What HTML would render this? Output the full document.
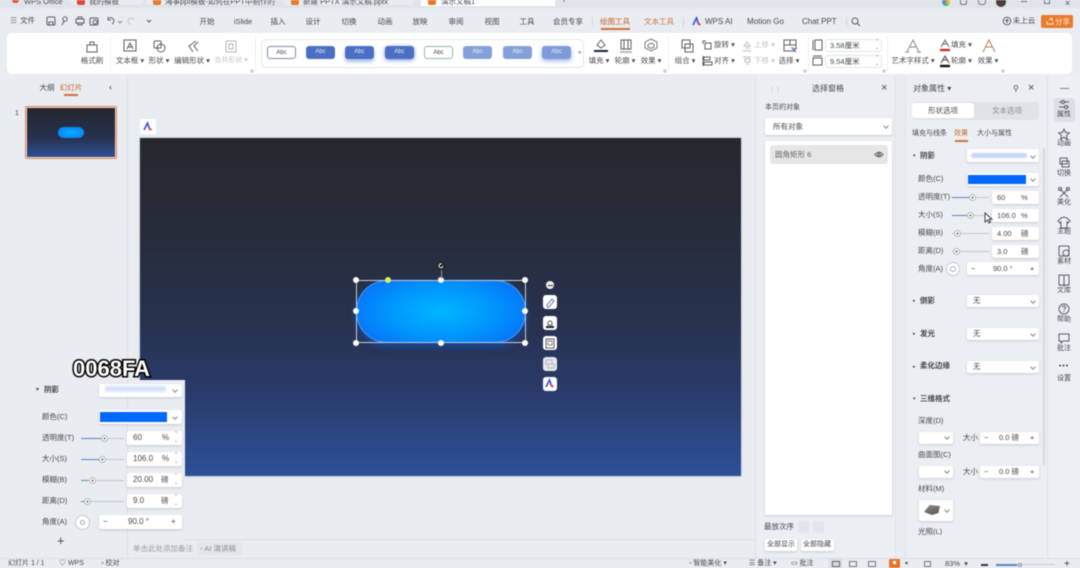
<!DOCTYPE html>
<html><head><meta charset="utf-8">
<style>
*{box-sizing:border-box;margin:0;padding:0}
html,body{width:1080px;height:568px;overflow:hidden;background:#e9ecf1}
body{font-family:"Liberation Sans","Noto Sans CJK SC",sans-serif;color:#46494e;position:relative}
#r{position:absolute;left:0;top:0;width:1080px;height:568px;overflow:hidden;filter:blur(.4px)}
.a{position:absolute}
.t{position:absolute;white-space:nowrap;font-size:7.5px;line-height:10px}
.c{transform:translateX(-50%)}
.w{position:absolute;background:#fff;border-radius:2px;box-shadow:0 1px 2px rgba(90,100,120,.25)}
.abc{position:absolute;top:46px;width:29px;height:13px;border-radius:3px;font-size:6px;line-height:13px;text-align:center;color:#e8edf8;background:#4a6fc4}
.v{position:absolute;width:4px;height:4px;border-right:1px solid #888;border-bottom:1px solid #888;transform:rotate(45deg)}
.tr{position:absolute;height:1.5px;background:#c3c7cd}
.fi{position:absolute;height:1.5px;background:#5b82c8}
.k{position:absolute;width:7px;height:7px;border-radius:50%;background:#fff;border:1px solid #bbb;box-shadow:inset 0 0 0 1.5px #fff,inset 0 0 0 3px #666}
.h{position:absolute;width:6px;height:6px;border-radius:50%;background:#fff}
svg{position:absolute;overflow:visible}
svg *{fill:none;stroke:#5a5e64;stroke-width:1}
</style></head><body><div id="r">

<!-- title bar -->
<div class="a" style="left:0;top:0;width:1080px;height:8px;background:#dfe4ea"></div>
<div class="a" style="left:71px;top:0;width:72px;height:5px;background:#e8ebef;border-radius:0 0 3px 3px"></div>
<div class="a" style="left:146px;top:0;width:129px;height:5px;background:#e8ebef"></div>
<div class="a" style="left:284px;top:0;width:129px;height:5px;background:#e8ebef"></div>
<div class="a" style="left:421px;top:0;width:134px;height:6px;background:#fff"></div>
<div class="a" style="left:12px;top:0;width:7px;height:3px;background:#e0523f;border-radius:0 0 3px 3px"></div>
<div class="a" style="left:77px;top:0;width:8px;height:5px;background:#e0483f;border-radius:0 0 2px 2px"></div>
<div class="a" style="left:153px;top:0;width:8px;height:5px;background:#e8792b;border-radius:0 0 2px 2px"></div>
<div class="a" style="left:291px;top:0;width:8px;height:5px;background:#e8792b;border-radius:0 0 2px 2px"></div>
<div class="a" style="left:428px;top:0;width:8px;height:5px;background:#e8792b;border-radius:0 0 2px 2px"></div>
<div class="t" style="left:24px;top:-3px">WPS Office</div>
<div class="t" style="left:89px;top:-3px">我的模板</div>
<div class="t" style="left:165px;top:-3px">海事ppt模板-如何在PPT中制作的</div>
<div class="t" style="left:303px;top:-3px">新建 PPTX 演示文稿.pptx</div>
<div class="t" style="left:441px;top:-3px">演示文稿1</div>
<div class="t" style="left:561px;top:-4px;font-size:10px">+</div>
<div class="a" style="left:942px;top:-2px;width:8px;height:8px;border-radius:50%;background:conic-gradient(#e55,#ec3,#4b6,#39e,#e55)"></div>
<div class="a" style="left:960px;top:-2px;width:7px;height:7px;border:1px solid #777;border-radius:2px"></div>
<div class="a" style="left:978px;top:-2px;width:8px;height:7px;border:1px solid #777;border-radius:3px"></div>
<div class="a" style="left:996px;top:-3px;width:10px;height:10px;border-radius:50%;background:#4a3d3a"></div>
<div class="a" style="left:1021px;top:1px;width:6px;height:1px;background:#777"></div>
<div class="a" style="left:1044px;top:-2px;width:6px;height:6px;border:1px solid #777"></div>
<div class="t" style="left:1065px;top:-2px;font-size:9px">×</div>

<!-- menu row -->
<div class="t" style="left:10px;top:16px;font-size:8px;color:#777">☰</div>
<div class="t" style="left:20px;top:16px">文件</div>
<svg style="left:46px;top:16px" width="120" height="12" viewBox="0 0 120 12">
<rect x="1" y="1" width="8" height="8" rx="1"/><path d="M3 9V6h4v3"/>
<circle cx="19" cy="3" r="2.2"/><path d="M18 5l-2 4"/>
<rect x="30" y="3" width="8" height="4"/><path d="M32 3V1h4v2M32 7v2h4V7"/>
<rect x="44" y="2" width="8" height="7" rx="1"/><circle cx="49" cy="6" r="2"/>
<path d="M63 2a3 3 0 1 1 3 6M62 1v3h3"/><path d="M72 5l2 2 2-2" style="stroke-width:.7"/>
<path d="M88 4a3 3 0 1 0-3 4" style="stroke:#c0c3c8"/><path d="M101 4l2 2 2-2"/>
</svg>
<div class="t c" style="left:207px;top:17px">开始</div>
<div class="t c" style="left:243px;top:17px">iSlide</div>
<div class="t c" style="left:278px;top:17px">插入</div>
<div class="t c" style="left:313px;top:17px">设计</div>
<div class="t c" style="left:349px;top:17px">切换</div>
<div class="t c" style="left:385px;top:17px">动画</div>
<div class="t c" style="left:420px;top:17px">放映</div>
<div class="t c" style="left:456px;top:17px">审阅</div>
<div class="t c" style="left:492px;top:17px">视图</div>
<div class="t c" style="left:527px;top:17px">工具</div>
<div class="t c" style="left:568px;top:17px">会员专享</div>
<div class="a" style="left:592px;top:17px;width:1px;height:10px;background:#d3d7dc"></div>
<div class="t c" style="left:615px;top:17px;color:#c9662a">绘图工具</div>
<div class="a" style="left:601px;top:28px;width:29px;height:1.5px;background:#d0713a"></div>
<div class="t c" style="left:659px;top:17px;color:#d07a46">文本工具</div>
<div class="a" style="left:683px;top:17px;width:1px;height:10px;background:#d3d7dc"></div>
<svg style="left:692px;top:17px" width="10" height="9" viewBox="0 0 10 9"><path d="M1 8L4.5 1 7 8" style="stroke:#2f52d8;stroke-width:1.6"/><path d="M5 5l3.500 3" style="stroke:#e2405a;stroke-width:1.6"/></svg>
<div class="t" style="left:705px;top:17px;font-size:8px">WPS AI</div>
<div class="t" style="left:747px;top:17px;font-size:8px">Motion Go</div>
<div class="t" style="left:802px;top:17px;font-size:8px">Chat PPT</div>
<div class="a" style="left:846px;top:17px;width:1px;height:10px;background:#d3d7dc"></div>
<svg style="left:851px;top:17px" width="10" height="10"><circle cx="4" cy="4" r="3"/><path d="M6 6l3 3"/></svg>
<svg style="left:1002px;top:16px" width="10" height="10"><circle cx="5" cy="5" r="3.800"/><path d="M5 7V3.500M3.500 5L5 3.500 6.500 5"/></svg>
<div class="t c" style="left:1024px;top:16px">未上云</div>
<div class="a" style="left:1041px;top:15px;width:32px;height:13px;background:#ea7a2c;border-radius:2px"></div>
<div class="t" style="left:1055px;top:16.500px;color:#ffe6d4">分享</div>
<svg style="left:1046px;top:17px" width="8" height="8"><path d="M1 4v3h6V5M3 3l3-2v3" style="stroke:#ffe6d4"/></svg>

<!-- ribbon -->
<div class="a" style="left:7px;top:33px;width:1065px;height:41px;background:#fff;border-radius:5px"></div>
<div class="a" style="left:110px;top:36px;width:1px;height:35px;background:#eceef1"></div>
<div class="a" style="left:255px;top:36px;width:1px;height:35px;background:#eceef1"></div>
<div class="a" style="left:668px;top:36px;width:1px;height:35px;background:#eceef1"></div>
<div class="a" style="left:808px;top:36px;width:1px;height:35px;background:#eceef1"></div>
<div class="a" style="left:887px;top:36px;width:1px;height:35px;background:#eceef1"></div>

<svg style="left:0;top:0" width="1080" height="80" viewBox="0 0 1080 80">
<!-- format brush -->
<path d="M87 45h10v7H87zM90 45v-3h4v3"/>
<!-- textbox -->
<rect x="124" y="40" width="12" height="11"/><path d="M127 49l3-6 3 6M128 47h4"/>
<!-- shape -->
<rect x="154" y="41" width="7" height="7" rx="1"/><circle cx="161" cy="48" r="4"/>
<!-- edit shape -->
<path d="M196 41l-7 5 4 6M198 42l-4 4 4 5"/>
<!-- merge -->
<g style="opacity:.45"><rect x="226" y="41" width="10" height="11"/><path d="M229 44h4v5h-4z"/></g>
<!-- fill -->
<path d="M597 45l4-5 4 5-4 3z"/><path d="M594 51h14" style="stroke:#1a2340;stroke-width:2"/>
<!-- outline -->
<path d="M621 40h10v9h-10zM624 40v9M628 40v9"/><path d="M620 52h12" style="stroke:#bbb;stroke-width:2"/>
<!-- effect -->
<path d="M651 39l6 3v6l-6 3-6-3v-6zM651 43l3 1.500v2.500l-3 1.500-3-1.500v-2.500z" style="stroke:#777"/>
<!-- group -->
<rect x="682" y="40" width="8" height="8"/><rect x="685" y="44" width="8" height="8"/>
<!-- rotate -->
<rect x="705" y="43" width="6" height="6"/><path d="M703 44v-3h3"/>
<!-- align -->
<path d="M703 56v10"/><rect x="704" y="57" width="6" height="3"/><rect x="704" y="62" width="8" height="3"/>
<!-- up/down -->
<g style="opacity:.4"><path d="M744 46l3-4 3 4zM745 48h5M743 51h8"/><path d="M743 57h8M745 59h5v3h-5zM746 64h3"/></g>
<!-- select -->
<path d="M795 51h-11V40h12v9M784 45h12M790 40v5M792 48l4 4"/>
<path d="M792 48l4 1-2 1z" style="stroke:#5e84c8"/>
<!-- size -->
<path d="M813 40v10M815 40h7v10h-7z"/><path d="M813 56h9M813 58h9v7h-9z"/>
<!-- wordart -->
<path d="M907 52l6-12 6 12M910 47h6M905 52h4M917 52h4" style="stroke:#8a8d92"/>
<path d="M941 47l4-7 4 7M943 44h4" style="stroke:#666"/><path d="M940 50h10" style="stroke:#cf2c2c;stroke-width:2.400"/>
<path d="M941 63l4-7 4 7M943 60h4" style="stroke:#444"/><path d="M940 66h10" style="stroke:#111;stroke-width:2.400"/>
<path d="M983 52l6-12 6 12M986 47h6" style="stroke:#b9805c"/>
<path d="M251 70h2v2h-2zM664 70h2v2h-2zM804 70h2v2h-2zM883 70h2v2h-2zM1002 70h2v2h-2z" style="stroke:#aaa;stroke-width:.7"/>
</svg>
<div class="t c" style="left:92px;top:56px">格式刷</div>
<div class="t c" style="left:130px;top:56px">文本框 ▾</div>
<div class="t c" style="left:159px;top:56px">形状 ▾</div>
<div class="t c" style="left:192px;top:56px">编辑形状 ▾</div>
<div class="t c" style="left:231px;top:56px;color:#bfc2c7;font-size:7px">合并形状 ▾</div>

<div class="a" style="left:261px;top:39px;width:323px;height:29px;border:1px solid #e2e5e9;border-radius:5px"></div>
<div class="abc" style="left:267px;background:#fff;color:#444;border:1px solid #7d8dab">Abc</div>
<div class="abc" style="left:306px">Abc</div>
<div class="abc" style="left:345px;box-shadow:0 3px 3px rgba(90,130,220,.5)">Abc</div>
<div class="abc" style="left:385px;box-shadow:0 1px 4px rgba(60,90,200,.7)">Abc</div>
<div class="abc" style="left:424px;background:#fff;color:#444;border:1px solid #8cb8ac">Abc</div>
<div class="abc" style="left:463px;background:#84a0d8">Abc</div>
<div class="abc" style="left:503px;background:#84a0d8">Abc</div>
<div class="abc" style="left:542px;background:#7e9bd8;box-shadow:0 2px 5px rgba(90,130,220,.6)">Abc</div>
<div class="t" style="left:578px;top:48px;font-size:6px">»</div>

<div class="t c" style="left:599px;top:56px">填充 ▾</div>
<div class="t c" style="left:625px;top:56px">轮廓 ▾</div>
<div class="t c" style="left:651px;top:56px">效果 ▾</div>
<div class="t c" style="left:685px;top:56px">组合 ▾</div>
<div class="t" style="left:714px;top:40px">旋转 ▾</div>
<div class="t" style="left:714px;top:56px">对齐 ▾</div>
<div class="t" style="left:754px;top:40px;color:#bfc2c7">上移 ▾</div>
<div class="t" style="left:754px;top:56px;color:#bfc2c7">下移 ▾</div>
<div class="t c" style="left:789px;top:56px">选择 ▾</div>

<div class="a" style="left:825px;top:39px;width:57px;height:13px;border:1px solid #e0e3e7;border-radius:3px"></div>
<div class="a" style="left:825px;top:55px;width:57px;height:13px;border:1px solid #e0e3e7;border-radius:3px"></div>
<div class="t" style="left:830px;top:40.500px">3.58厘米</div>
<div class="t" style="left:830px;top:56.500px">9.54厘米</div>
<div class="t" style="left:875px;top:39px;font-size:5px;line-height:6px;color:#777">⌃<br>⌄</div>
<div class="t" style="left:875px;top:55px;font-size:5px;line-height:6px;color:#777">⌃<br>⌄</div>

<div class="t c" style="left:913px;top:56px">艺术字样式 ▾</div>
<div class="t" style="left:951px;top:40px">填充 ▾</div>
<div class="t" style="left:951px;top:56px">轮廓 ▾</div>
<div class="t c" style="left:988px;top:56px">效果 ▾</div>

<!-- left panel -->
<div class="a" style="left:127px;top:75px;width:1px;height:483px;background:#dde0e5"></div>
<div class="t c" style="left:47px;top:83px">大纲</div>
<div class="t c" style="left:71px;top:83px;color:#c9662a">幻灯片</div>
<div class="a" style="left:64px;top:94px;width:14px;height:1.500px;background:#d0713a"></div>
<div class="t" style="left:109px;top:82px;font-size:9px">‹</div>
<div class="t" style="left:15px;top:109px;font-size:7px">1</div>
<div class="a" style="left:25px;top:106px;width:92px;height:53px;border:1.500px solid #e2885a;border-radius:2px;padding:1px;background:#f0d8c8">
<div style="position:relative;width:100%;height:100%;background:linear-gradient(#23272f,#27314d 60%,#2c5095)">
<div class="a" style="left:31px;top:19px;width:26px;height:11px;border-radius:6px;background:radial-gradient(ellipse,#06b0ff,#0a78f5)"></div></div></div>

<!-- canvas -->
<div class="a" style="left:140px;top:119px;width:16px;height:15px;background:#fff"></div>
<svg style="left:143px;top:122px" width="10" height="9"><path d="M1 8L4.500 1 7 8" style="stroke:#2f52d8;stroke-width:1.600"/><path d="M5 5l3.500 3" style="stroke:#e2405a;stroke-width:1.600"/></svg>
<div class="a" style="left:140px;top:138px;width:601px;height:338px;background:linear-gradient(#25282e 0,#272d3c 30%,#28324f 55%,#2a3b6b 75%,#2c4c8e 95%,#2d5099 100%);box-shadow:0 0 2px rgba(60,70,90,.4)"></div>
<div class="a" style="left:356px;top:280px;width:170px;height:63px;border-radius:31px;background:radial-gradient(ellipse 60% 75% at 50% 50%,#00b6ff 0,#0094fd 55%,#0a6df8 100%);border:1px solid rgba(150,205,255,.45);box-shadow:0 3px 8px rgba(0,104,250,.5)"></div>
<div class="a" style="left:356px;top:280px;width:170px;height:63px;border:1px solid #c8ced8"></div>
<div class="h" style="left:353px;top:277px"></div><div class="h" style="left:438px;top:277px"></div><div class="h" style="left:522px;top:277px"></div>
<div class="h" style="left:353px;top:308px"></div><div class="h" style="left:522px;top:308px"></div>
<div class="h" style="left:353px;top:340px"></div><div class="h" style="left:438px;top:340px"></div><div class="h" style="left:522px;top:340px"></div>
<div class="h" style="left:385px;top:277px;background:#dcec5a"></div>
<div class="a" style="left:440.500px;top:270px;width:1px;height:9px;background:#8a8f99"></div>
<div class="a" style="left:437px;top:262px;width:8px;height:8px;border-radius:50%;background:#222"></div>
<svg style="left:438px;top:263px" width="6" height="6"><path d="M5 3a2 2 0 1 1-1-2" style="stroke:#eee"/></svg>

<div class="a" style="left:546px;top:281px;width:8px;height:8px;border-radius:50%;background:#eee"></div>
<div class="a" style="left:547.500px;top:284.500px;width:5px;height:1px;background:#333"></div>
<div class="a" style="left:543px;top:295px;width:14px;height:14px;background:#fff;border-radius:3px"></div>
<div class="a" style="left:543px;top:316px;width:14px;height:14px;background:#fff;border-radius:3px"></div>
<div class="a" style="left:543px;top:336px;width:14px;height:14px;background:#fff;border-radius:3px"></div>
<div class="a" style="left:543px;top:357px;width:14px;height:14px;background:#e4e6ea;border-radius:3px"></div>
<div class="a" style="left:543px;top:377px;width:14px;height:14px;background:#fff;border-radius:3px"></div>
<svg style="left:543px;top:295px" width="14" height="96" viewBox="0 0 14 96">
<path d="M4 10L9 4l2 2-5 6-2 0z" style="stroke:#6a7fb5"/>
<path d="M5 28a2 2 0 1 1 4 0v2H5z"/><path d="M3 32h8" style="stroke:#222;stroke-width:2"/>
<rect x="3" y="44" width="8" height="9"/><rect x="5" y="46" width="4" height="4" style="stroke:#888"/>
<rect x="3" y="65" width="6" height="4" style="stroke:#b5b8bd"/><rect x="5" y="69" width="6" height="4" style="stroke:#b5b8bd"/>
<path d="M3 92L6.500 85 9 92" style="stroke:#2f52d8;stroke-width:1.600"/><path d="M7 89l3.500 3" style="stroke:#e2405a;stroke-width:1.600"/>
</svg>

<!-- bottom notes -->
<div class="a" style="left:127px;top:539px;width:628px;height:1px;background:#dcdfe4"></div>
<div class="t" style="left:133px;top:544px;color:#9a9da2">单击此处添加备注</div>
<div class="a" style="left:197px;top:542px;width:45px;height:13px;background:#e4e6ea;border-radius:2px"></div>
<div class="t" style="left:200px;top:544px;color:#8b8e94">▫ AI 演讲稿</div>

<!-- big label + overlay panel -->
<div class="a" style="left:0;top:380px;width:185px;height:160px;background:#e9ecf1"></div>
<div class="a" style="left:127px;top:380px;width:1px;height:160px;background:#dde0e5"></div>
<div class="t" style="left:73px;top:356px;font-size:22px;line-height:25px;font-weight:bold;color:#fff;-webkit-text-stroke:3px #000;paint-order:stroke fill">0068FA</div>

<div class="t" style="left:36px;top:385px;font-size:6px">▾</div>
<div class="t" style="left:44px;top:385px;font-weight:bold">阴影</div>
<div class="w" style="left:99px;top:384px;width:83px;height:13px"></div>
<div class="a" style="left:105px;top:386px;width:61px;height:6px;background:#d6e2fa;filter:blur(1px)"></div>
<div class="v" style="left:173px;top:388px"></div>
<div class="t" style="left:42px;top:412px">颜色(C)</div>
<div class="w" style="left:99px;top:410px;width:83px;height:14px"></div>
<div class="a" style="left:100px;top:412px;width:67px;height:10px;background:#0068fa"></div>
<div class="v" style="left:173px;top:415px"></div>

<div class="t" style="left:42px;top:433px">透明度(T)</div>
<div class="tr" style="left:81px;top:437.500px;width:43px"></div><div class="fi" style="left:81px;top:437.500px;width:21px"></div><div class="k" style="left:101px;top:434.500px"></div>
<div class="w" style="left:127px;top:431px;width:55px;height:14px"></div>
<div class="t" style="left:133px;top:433px;font-size:8px">60</div><div class="t" style="left:162px;top:433px;font-size:8px">%</div>

<div class="t" style="left:42px;top:454px">大小(S)</div>
<div class="tr" style="left:81px;top:458.500px;width:43px"></div><div class="fi" style="left:81px;top:458.500px;width:19px"></div><div class="k" style="left:99px;top:455.500px"></div>
<div class="w" style="left:127px;top:452px;width:55px;height:14px"></div>
<div class="t" style="left:133px;top:454px;font-size:8px">106.0</div><div class="t" style="left:162px;top:454px;font-size:8px">%</div>

<div class="t" style="left:42px;top:475px">模糊(B)</div>
<div class="tr" style="left:81px;top:479.500px;width:43px"></div><div class="fi" style="left:81px;top:479.500px;width:7px"></div><div class="k" style="left:89px;top:476.500px"></div>
<div class="w" style="left:127px;top:473px;width:55px;height:14px"></div>
<div class="t" style="left:133px;top:475px;font-size:8px">20.00</div><div class="t" style="left:161px;top:475px">磅</div>

<div class="t" style="left:42px;top:496px">距离(D)</div>
<div class="tr" style="left:81px;top:500.500px;width:43px"></div><div class="fi" style="left:81px;top:500.500px;width:3px"></div><div class="k" style="left:84px;top:497.500px"></div>
<div class="w" style="left:127px;top:494px;width:55px;height:14px"></div>
<div class="t" style="left:133px;top:496px;font-size:8px">9.0</div><div class="t" style="left:161px;top:496px">磅</div>

<div class="t" style="left:42px;top:517px">角度(A)</div>
<div class="a" style="left:75px;top:515px;width:15px;height:15px;border-radius:50%;background:#fff;border:1px solid #c8ccd2;box-shadow:inset 0 0 0 4px #fff,inset 0 0 0 5px #aaa"></div>
<div class="w" style="left:99px;top:515px;width:83px;height:14px"></div>
<div class="t" style="left:103px;top:517px;font-size:8px">−</div>
<div class="t" style="left:128px;top:517px;font-size:8px">90.0 °</div>
<div class="t" style="left:171px;top:517px;font-size:8px">+</div>
<div class="t" style="left:57px;top:534px;font-size:13px;line-height:14px;color:#444">+</div>
<div class="t" style="left:174px;top:431px;font-size:5px;line-height:7px;color:#777">⌃<br>⌄</div>
<div class="t" style="left:174px;top:452px;font-size:5px;line-height:7px;color:#777">⌃<br>⌄</div>
<div class="t" style="left:174px;top:473px;font-size:5px;line-height:7px;color:#777">⌃<br>⌄</div>
<div class="t" style="left:174px;top:494px;font-size:5px;line-height:7px;color:#777">⌃<br>⌄</div>

<!-- selection pane -->
<div class="a" style="left:755px;top:75px;width:141px;height:483px;background:#ebeef3;border-left:1px solid #e0e3e8;border-right:1px solid #e0e3e8"></div>
<div class="t" style="left:769px;top:85px;font-size:6px;color:#aaa">⋮⋮</div>
<div class="t c" style="left:828px;top:84px;font-size:8px">选择窗格</div>
<div class="t" style="left:881px;top:83px;font-size:11px">×</div>
<div class="t" style="left:765px;top:103px;font-size:7px">本页的对象</div>
<div class="w" style="left:765px;top:118px;width:127px;height:17px"></div>
<div class="t" style="left:773px;top:122px">所有对象</div>
<div class="v" style="left:884px;top:124px"></div>
<div class="w" style="left:765px;top:141px;width:127px;height:374px"></div>
<div class="a" style="left:770px;top:145px;width:118px;height:19px;background:#e6e6e6;border-radius:3px"></div>
<div class="t" style="left:775px;top:150px;color:#666">圆角矩形 6</div>
<svg style="left:874px;top:151px" width="10" height="7"><path d="M1 3.500Q5-1 9 3.500Q5 8 1 3.500z"/><circle cx="5" cy="3.500" r="1.200"/></svg>
<div class="t" style="left:764px;top:522px">最放次序</div>
<div class="a" style="left:798px;top:521px;width:11px;height:12px;background:#e4e6ea;border-radius:2px"></div>
<div class="a" style="left:813px;top:521px;width:11px;height:12px;background:#e4e6ea;border-radius:2px"></div>
<div class="w" style="left:765px;top:539px;width:32px;height:12px"></div>
<div class="t" style="left:767px;top:540px;font-size:7px">全部显示</div>
<div class="w" style="left:801px;top:539px;width:33px;height:12px"></div>
<div class="t" style="left:803px;top:540px;font-size:7px">全部隐藏</div>

<!-- property pane -->
<div class="a" style="left:905px;top:75px;width:143px;height:483px;background:#ebeef3;border-left:1px solid #e0e3e8;border-right:1px solid #e0e3e8"></div>
<div class="t" style="left:913px;top:84px;font-size:8px">对象属性 ▾</div>
<div class="t" style="left:1013px;top:84px;font-size:8px">⚲</div>
<div class="t" style="left:1028px;top:83px;font-size:11px">×</div>
<div class="a" style="left:912px;top:102px;width:127px;height:18px;background:#dfe2e7;border-radius:4px"></div>
<div class="a" style="left:912px;top:103px;width:62px;height:15px;background:#fff;border-radius:3px"></div>
<div class="t c" style="left:943px;top:106px">形状选项</div>
<div class="t c" style="left:1007px;top:106px;color:#8a8d92">文本选项</div>
<div class="t" style="left:912px;top:129px;font-size:7px">填充与线条</div>
<div class="t" style="left:954px;top:129px;font-size:7px;color:#c9662a">效果</div>
<div class="a" style="left:955px;top:140px;width:13px;height:1.500px;background:#d0713a"></div>
<div class="t" style="left:977px;top:129px;font-size:7px">大小与属性</div>
<div class="a" style="left:1043px;top:148px;width:2px;height:317px;background:#d5d8dd"></div>

<div class="t" style="left:913px;top:151px;font-size:5px">▾</div>
<div class="t" style="left:920px;top:151px;font-weight:bold">阴影</div>
<div class="w" style="left:967px;top:149px;width:72px;height:13px"></div>
<div class="a" style="left:971px;top:153px;width:56px;height:5px;background:#c5d6f8;border-radius:3px;filter:blur(.8px)"></div>
<div class="v" style="left:1031px;top:154px"></div>

<div class="t" style="left:918px;top:174px">颜色(C)</div>
<div class="w" style="left:967px;top:173px;width:72px;height:13px"></div>
<div class="a" style="left:968px;top:175px;width:58px;height:9px;background:#0068fa"></div>
<div class="v" style="left:1031px;top:177px"></div>

<div class="t" style="left:918px;top:192px">透明度(T)</div>
<div class="tr" style="left:952px;top:196.500px;width:37px"></div><div class="fi" style="left:952px;top:196.500px;width:19px"></div><div class="k" style="left:969px;top:193.500px"></div>
<div class="w" style="left:992px;top:191px;width:47px;height:13px"></div>
<div class="t" style="left:997px;top:192.500px">60</div><div class="t" style="left:1021px;top:192.500px">%</div>

<div class="t" style="left:918px;top:210px">大小(S)</div>
<div class="tr" style="left:952px;top:214.500px;width:37px"></div><div class="fi" style="left:952px;top:214.500px;width:17px"></div><div class="k" style="left:967px;top:211.500px"></div>
<div class="w" style="left:992px;top:209px;width:47px;height:13px"></div>
<div class="t" style="left:997px;top:210.500px">106.0</div><div class="t" style="left:1021px;top:210.500px">%</div>
<svg style="left:984px;top:212px" width="9" height="12"><path d="M1 1v9l2.500-2 1.500 3 1.500-.7-1.500-3h3z" style="fill:#fff;stroke:#444"/></svg>

<div class="t" style="left:918px;top:228px">模糊(B)</div>
<div class="tr" style="left:952px;top:232.500px;width:37px"></div><div class="k" style="left:954px;top:229.500px"></div>
<div class="w" style="left:992px;top:227px;width:47px;height:13px"></div>
<div class="t" style="left:997px;top:228.500px">4.00</div><div class="t" style="left:1021px;top:228.500px">磅</div>

<div class="t" style="left:918px;top:246px">距离(D)</div>
<div class="tr" style="left:952px;top:250.500px;width:37px"></div><div class="k" style="left:953px;top:247.500px"></div>
<div class="w" style="left:992px;top:245px;width:47px;height:13px"></div>
<div class="t" style="left:997px;top:246.500px">3.0</div><div class="t" style="left:1021px;top:246.500px">磅</div>

<div class="t" style="left:918px;top:264px">角度(A)</div>
<div class="a" style="left:946px;top:262px;width:14px;height:14px;border-radius:50%;background:#fff;border:1px solid #c8ccd2;box-shadow:inset 0 0 0 3px #fff,inset 0 0 0 4px #aaa"></div>
<div class="w" style="left:967px;top:262px;width:72px;height:13px"></div>
<div class="t" style="left:971px;top:264px">−</div>
<div class="t" style="left:993px;top:264px">90.0 °</div>
<div class="t" style="left:1030px;top:264px">+</div>

<div class="t" style="left:913px;top:296px;font-size:5px">▸</div>
<div class="t" style="left:920px;top:296px;font-weight:bold">倒影</div>
<div class="w" style="left:967px;top:295px;width:72px;height:12px"></div>
<div class="t" style="left:973px;top:296px">无</div>
<div class="v" style="left:1031px;top:299px"></div>

<div class="t" style="left:913px;top:329px;font-size:5px">▸</div>
<div class="t" style="left:920px;top:329px;font-weight:bold">发光</div>
<div class="w" style="left:967px;top:328px;width:72px;height:12px"></div>
<div class="t" style="left:973px;top:329px">无</div>
<div class="v" style="left:1031px;top:332px"></div>

<div class="t" style="left:913px;top:362px;font-size:5px">▸</div>
<div class="t" style="left:920px;top:361px;font-weight:bold">柔化边缘</div>
<div class="w" style="left:967px;top:361px;width:72px;height:12px"></div>
<div class="t" style="left:973px;top:362px">无</div>
<div class="v" style="left:1031px;top:365px"></div>

<div class="t" style="left:913px;top:394px;font-size:5px">▾</div>
<div class="t" style="left:920px;top:394px;font-weight:bold">三维格式</div>
<div class="t" style="left:918px;top:416px">深度(D)</div>
<div class="w" style="left:919px;top:432px;width:34px;height:12px"></div><div class="v" style="left:945px;top:435px"></div>
<div class="t" style="left:963px;top:433px">大小</div>
<div class="w" style="left:980px;top:432px;width:59px;height:12px"></div>
<div class="t" style="left:984px;top:433px">−</div><div class="t" style="left:999px;top:433px">0.0 磅</div><div class="t" style="left:1030px;top:433px">+</div>
<div class="t" style="left:918px;top:450px">曲面图(C)</div>
<div class="w" style="left:919px;top:466px;width:34px;height:12px"></div><div class="v" style="left:945px;top:469px"></div>
<div class="t" style="left:963px;top:467px">大小</div>
<div class="w" style="left:980px;top:466px;width:59px;height:12px"></div>
<div class="t" style="left:984px;top:467px">−</div><div class="t" style="left:999px;top:467px">0.0 磅</div><div class="t" style="left:1030px;top:467px">+</div>
<div class="t" style="left:918px;top:484px">材料(M)</div>
<div class="w" style="left:919px;top:500px;width:34px;height:21px"></div>
<div class="a" style="left:924px;top:505px;width:16px;height:10px;background:linear-gradient(160deg,#8a8a8a,#555);clip-path:polygon(35% 0,100% 10%,90% 80%,50% 100%,0 70%)"></div>
<div class="v" style="left:945px;top:508px"></div>
<div class="a" style="left:905px;top:527px;width:60px;height:8px;overflow:hidden"><div class="t" style="left:13px;top:0">光照(L)</div></div>

<!-- right rail -->
<div class="a" style="left:1049px;top:75px;width:31px;height:483px;background:#eceff4"></div>
<div class="a" style="left:1054px;top:98px;width:21px;height:24px;background:#dcdfe5;border-radius:3px"></div>
<div class="a" style="left:1060px;top:88px;width:9px;height:1px;background:#888"></div>
<svg style="left:0;top:0" width="1080" height="568" viewBox="0 0 1080 568">
<path d="M1059 102h2M1065 102h4M1059 107h5M1068 107h1"/><circle cx="1063" cy="102" r="1.500"/><circle cx="1066" cy="107" r="1.500"/>
<path d="M1064 129l1.500 3.500 3.800.4-2.800 2.600.8 3.700-3.300-2-3.300 2 .8-3.700-2.800-2.600 3.800-.4z"/>
<rect x="1060" y="158" width="7" height="6"/><rect x="1062" y="161" width="7" height="6"/>
<path d="M1060 189l8 8M1068 189l-8 8"/><circle cx="1060" cy="189" r="1.500"/><circle cx="1068" cy="189" r="1.500"/>
<path d="M1061 218l3-1 3 1 3 3-2 2-1-1v6h-6v-6l-1 1-2-2z"/>
<rect x="1059" y="246" width="10" height="10" rx="1"/><circle cx="1066" cy="253" r="3"/>
<path d="M1059 275v10h4l1 1 1-1h4v-10h-4l-1 1-1-1zM1064 276v9"/>
<circle cx="1064" cy="309" r="5"/><path d="M1064 311v1M1062.500 307.500a1.500 1.500 0 1 1 2 1.500l-.5 1"/>
<path d="M1059 334h10v7h-6l-2 2v-2h-2z"/>
</svg>
<div class="t c" style="left:1064px;top:110px;font-size:7px">属性</div>
<div class="t c" style="left:1064px;top:139px;font-size:7px">动画</div>
<div class="t c" style="left:1064px;top:169px;font-size:7px">切换</div>
<div class="t c" style="left:1064px;top:198px;font-size:7px">美化</div>
<div class="t c" style="left:1064px;top:227px;font-size:7px">主题</div>
<div class="t c" style="left:1064px;top:257px;font-size:7px">素材</div>
<div class="t c" style="left:1064px;top:286px;font-size:7px">文库</div>
<div class="t c" style="left:1064px;top:315px;font-size:7px">帮助</div>
<div class="t c" style="left:1064px;top:344px;font-size:7px">批注</div>
<div class="t c" style="left:1064px;top:362px;font-size:7px;letter-spacing:1px">•••</div>
<div class="t c" style="left:1064px;top:374px;font-size:7px">设置</div>

<!-- status bar -->
<div class="a" style="left:0;top:558px;width:1080px;height:10px;background:#e9ecf1;border-top:1px solid #dcdfe4"></div>
<div class="t" style="left:8px;top:559px;font-size:7px">幻灯片 1 / 1</div>
<div class="t" style="left:59px;top:559px;font-size:7px">♡ WPS</div>
<div class="t" style="left:101px;top:559px;font-size:7px">▫ 校对</div>
<div class="t" style="left:689px;top:559px;font-size:7px">▫ 智能美化 ▾</div>
<div class="t" style="left:749px;top:559px;font-size:7px">☰ 备注 ▾</div>
<div class="t" style="left:791px;top:559px;font-size:7px">▭ 批注</div>
<div class="a" style="left:829px;top:559px;width:13px;height:9px;background:#d8dbe0"></div>
<div class="a" style="left:832px;top:561px;width:8px;height:6px;border:1px solid #666"></div>
<div class="a" style="left:849px;top:561px;width:8px;height:6px;border:1px solid #777"></div>
<div class="a" style="left:868px;top:561px;width:8px;height:6px;border:1px solid #777"></div>
<div class="a" style="left:889px;top:559px;width:11px;height:9px;background:#e8752c;border-radius:1px"></div>
<div class="a" style="left:893px;top:561px;width:3px;height:3px;background:#fff"></div>
<div class="t" style="left:905px;top:559px;font-size:6px">▾</div>
<div class="a" style="left:924px;top:561px;width:7px;height:6px;border:1px solid #777"></div>
<div class="t" style="left:945px;top:559px;font-size:7.500px">83% &nbsp;▾</div>
<div class="a" style="left:981px;top:564px;width:7px;height:1.500px;background:#333"></div>
<div class="a" style="left:996px;top:564px;width:59px;height:1px;background:#c8ccd2"></div>
<div class="a" style="left:996px;top:563.500px;width:21px;height:2px;background:#5b82c8"></div>
<div class="a" style="left:1018px;top:562.500px;width:4px;height:4px;background:#fff;border:1px solid #888;border-radius:50%"></div>
<div class="t" style="left:1064px;top:560px;font-size:10px;line-height:9px;color:#333">+</div>

</div></body></html>
